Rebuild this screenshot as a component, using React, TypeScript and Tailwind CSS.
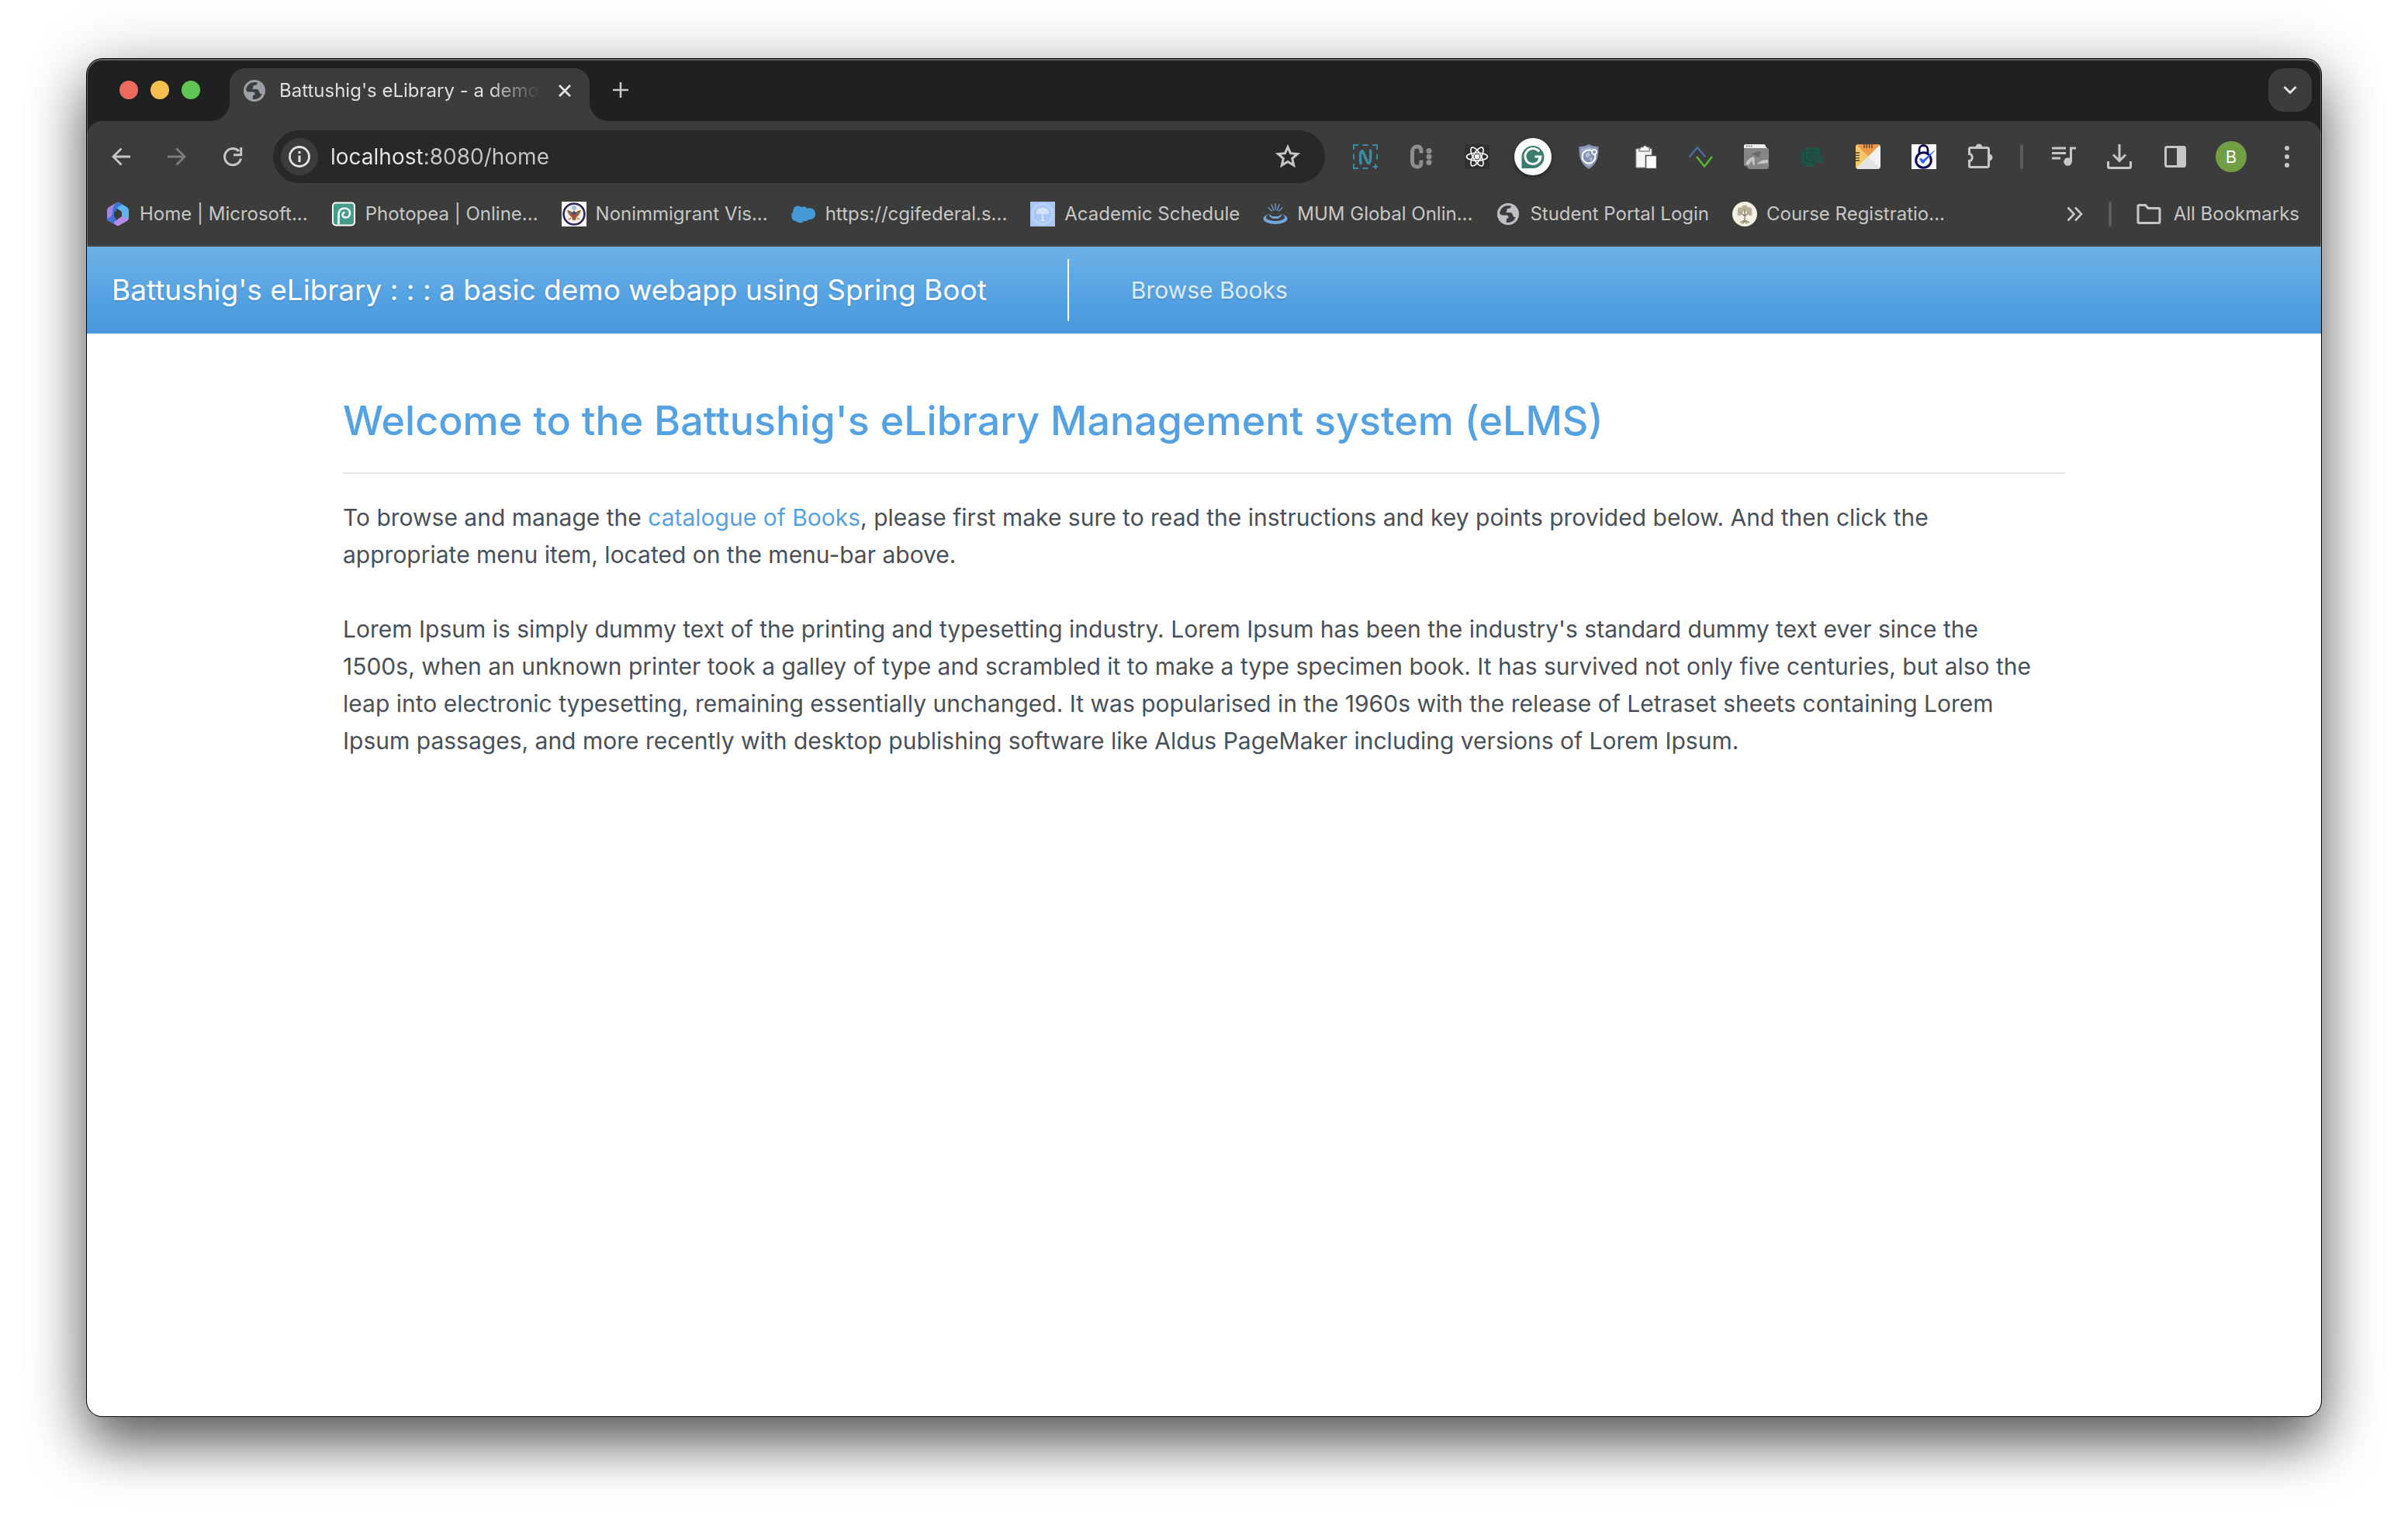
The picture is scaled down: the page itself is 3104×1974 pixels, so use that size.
import type { ReactNode } from "react";

type IconProps = { className?: string };

function Svg({ children, className = "size-8", box = "0 0 32 32" }: { children: ReactNode; className?: string; box?: string }) {
  return (
    <svg viewBox={box} className={className} fill="none" aria-hidden="true">
      {children}
    </svg>
  );
}

/* ---------- browser icons ---------- */

function GlobeIcon({ className }: IconProps) {
  return (
    <Svg className={className}>
      <circle cx="16" cy="16" r="14" fill="currentColor" />
      <path
        d="M5 15C6 9 10 5 16 5c1.500 0 2.800.3 4 .7-.4 2.300-1.800 3.300-4 3.300-1.600 0-1.700 1.300-1.600 2.500.1 1.400-1.100 1.500-1.600 2.500h5.200c3 0 4 1.800 4 3.600 0 1.400 1.200 1.700 1.900 1.900 1 .3 1.600 0 2-.5C24.800 24 20.500 27 15.800 27c-.9 0-1.500-.1-2-.2v-3.200c0-1.300 1-2.300 2.600-2.300v-1.800c0-1.500-1.400-2-2.900-2H9c-2 0-3.300-1-4-2.500z"
        fill="#3c3c3c"
      />
      <path d="M17 10c2.500-.3 4.400-1.400 5-3.200 3 2 5 5.200 5 9.200 0 1.600-.3 3-1 4-1.700.3-3-.4-3.300-2-.5-2.600-1.800-4.500-5-4.900-1.700-.3-1.500-2.700-.7-3.100z" fill="currentColor" />
    </Svg>
  );
}

function BackIcon() {
  return (
    <Svg>
      <path d="M28 16H7M16.500 5.500 6 16l10.500 10.500" stroke="currentColor" strokeWidth="2.800" />
    </Svg>
  );
}

function ForwardIcon() {
  return (
    <Svg>
      <path d="M4 16h21M15.500 5.500 26 16 15.500 26.500" stroke="currentColor" strokeWidth="2.800" />
    </Svg>
  );
}

function ReloadIcon() {
  return (
    <Svg>
      <path d="M26.500 18.500A10.600 10.600 0 1 1 24 9" stroke="currentColor" strokeWidth="3" />
      <path d="M26.700 4v9.700H17" stroke="currentColor" strokeWidth="3" />
    </Svg>
  );
}

function InfoIcon() {
  return (
    <Svg>
      <circle cx="16" cy="16" r="12.500" stroke="currentColor" strokeWidth="2.800" />
      <path d="M16 14.500V23M16 9v3" stroke="currentColor" strokeWidth="3" />
    </Svg>
  );
}

function StarIcon() {
  return (
    <Svg className="size-9" box="0 0 36 36">
      <path
        d="m18 5.500 3.500 8.200 9 .8-6.800 5.900 2 8.700-7.700-4.600-7.700 4.600 2-8.700-6.800-5.900 9-.8z"
        stroke="currentColor"
        strokeWidth="3"
      />
    </Svg>
  );
}

/* ---------- extension icons ---------- */

function SnapIcon() {
  return (
    <Svg>
      <path d="M1 7V1h6M12.500 1h7M25 1h6v6M31 12.500v7M1 12.500v7M1 25v6h6M12.500 31h7M25.500 29h6.500M29 25.500V32" stroke="#3b8aa0" strokeWidth="2" />
      <path d="M10 24.500C9 18 9.500 9 11.500 8.500 14 8 17 24 20.500 24.500c2.500 0 2.500-11 2-16.500" stroke="#3b8aa0" strokeWidth="3.600" strokeLinecap="round" />
    </Svg>
  );
}

function CDotsIcon() {
  return (
    <Svg>
      <path d="M16 11.500V9c0-4-1.800-6-5-6S4.500 5.500 4.500 9.500v13C4.500 26.500 7 29 11 29s5-2 5-6v-2.500" stroke="#8e8e8e" strokeWidth="5" />
      <circle cx="26" cy="8.500" r="3.500" fill="#8e8e8e" />
      <circle cx="26" cy="16" r="3.500" fill="#8e8e8e" />
      <circle cx="26" cy="23.500" r="3.500" fill="#8e8e8e" />
    </Svg>
  );
}

function AtomIcon() {
  return (
    <Svg>
      <rect width="32" height="32" rx="3" fill="#303030" />
      <g stroke="#fff" strokeWidth="1.600">
        <ellipse cx="16" cy="16" rx="13.500" ry="5" />
        <ellipse cx="16" cy="16" rx="13.500" ry="5" transform="rotate(60 16 16)" />
        <ellipse cx="16" cy="16" rx="13.500" ry="5" transform="rotate(120 16 16)" />
      </g>
      <circle cx="16" cy="16" r="3.200" fill="#fff" />
    </Svg>
  );
}

function GrammarIcon() {
  return (
    <span className="flex size-12 shrink-0 items-center justify-center rounded-full bg-white shadow-[0_2px_6px_rgba(0,0,0,0.45)]">
      <Svg>
        <path d="M1.500 31V16A14.500 14.500 0 1 1 16 31z" fill="#3a7d6e" />
        <path d="M24 9.500A10 10 0 1 0 26 16h-7.500M26 15.500l-3 7" stroke="#fff" strokeWidth="3" />
      </Svg>
    </span>
  );
}

function ShieldIcon() {
  return (
    <Svg>
      <path d="M16 0c4 2 8 3 12.500 3 .5 13-2 23-12.500 29C5.500 26 3 16 3.500 3 8 3 12 2 16 0z" fill="#8493b3" />
      <path d="M16 3c3 1.500 6 2.300 10 2.500 0 11-2 18-10 23.500C8 23.500 6 16.500 6 5.500 10 5.300 13 4.500 16 3z" fill="#a3aec8" />
      <circle cx="16" cy="16" r="8.500" fill="#8492b3" stroke="#fff" strokeWidth="2" />
      <path d="M12 12l4-2 2 4-3 3-3-1zM18 17l3 1-2 4-2-2z" fill="#b3bfd8" />
      <circle cx="23" cy="10" r="3" fill="#8c9bc0" stroke="#fff" strokeWidth="1.500" />
    </Svg>
  );
}

function PasteIcon() {
  return (
    <Svg>
      <path d="M5 6h6V4h3.500a2 2 0 0 1 4 0H22v2h3v24H5z" fill="#f4f4f4" stroke="#a5a5a5" strokeWidth="1" />
      <path d="M9 5v4h13V5" stroke="#8a8a8a" strokeWidth="1.500" />
      <rect x="17.500" y="14.500" width="14" height="17" fill="#fff" stroke="#4a4a4a" strokeWidth="1.500" />
    </Svg>
  );
}

function ZigzagIcon() {
  return (
    <Svg>
      <path d="M1.500 16.500 12 4l10 12" stroke="#4a6da7" strokeWidth="2.400" />
      <path d="m11 16 10 12.500L31 16" stroke="#5cb531" strokeWidth="2.600" />
    </Svg>
  );
}

function PhotoWindowIcon() {
  return (
    <Svg>
      <path d="M1 5h29a2 2 0 0 1 2 2v22a3 3 0 0 1-3 3H7c-2-.5-3-2-3-3.500L0 28V6z" fill="#868686" />
      <path d="M2 0h23a3 3 0 0 1 3 3l2 2H0V2a2 2 0 0 1 2-2z" fill="#efefef" />
      <path d="M3 2.500h1.500M6 2.500h1.500M9 2.500h1.500" stroke="#555" strokeWidth="1.500" />
      <path d="M2 26c1-4 3-6 6-8l4-2c3 1 1 6 2 12l-3-3-1-4-4 6zM17 25c3-3 7-5 14-5v4c-4 0-8 2-14 1z" fill="#c4c4c4" />
      <path d="M10 13c3-3 7-4 12-4l-3 8c-2 0-3-3-9-4z" fill="#6a6a6a" />
    </Svg>
  );
}

function KnotIcon() {
  return (
    <Svg>
      <path d="M7 4h16l4 4v10h5l-3 3 2 3H20l-2 5H9l-7-5V9h5z" fill="#1f5247" />
      <path d="M6.500 9v10l4 3.500H20M10 8.500h10" stroke="#174035" strokeWidth="1.200" />
      <path d="m16 11 4 2v5l-4 2-4-2v-5z" fill="#2f4440" />
      <circle cx="16" cy="15" r="2.500" fill="#1f5247" />
    </Svg>
  );
}

function RulerMailIcon() {
  return (
    <Svg>
      <rect width="32" height="32" rx="4" fill="#f2f2f2" />
      <path d="M4 0h24a4 4 0 0 1 2.800 1.200L16 16 1.200 1.200A4 4 0 0 1 4 0z" fill="#ee9a4d" />
      <path d="M1.200 1.200 16 16 1.200 30.800A4 4 0 0 1 0 28V4a4 4 0 0 1 1.200-2.800z" fill="#f4c767" />
      <path d="m16 16 14.800 14.800A4 4 0 0 1 28 32H4a4 4 0 0 1-2.800-1.200z" fill="#e3e3e3" />
      <path d="M11 0v5M14.300 0v5M17.600 0v5M21 0v5M0 11h5M0 14.300h5M0 17.600h5M0 21h5" stroke="#4b3b23" strokeWidth="1.300" />
    </Svg>
  );
}

function LockCheckIcon() {
  return (
    <Svg>
      <rect width="32" height="32" fill="#fff" />
      <path d="M10 12V7a5.500 5.500 0 0 1 11 0v5z" stroke="#0d0a57" strokeWidth="2.800" />
      <circle cx="15.500" cy="20.500" r="9.800" stroke="#0d0a57" strokeWidth="3" fill="#fff" />
      <path d="m10.500 19 4 6L29.500 8.500 15 20.500l-2-2z" fill="#2f5fff" stroke="#2f5fff" strokeWidth="1" />
    </Svg>
  );
}

function PuzzleIcon() {
  return (
    <Svg className="size-9" box="0 0 36 36">
      <path d="M6 6.500h22A1.500 1.500 0 0 1 29.500 8v22a1.500 1.500 0 0 1-1.500 1.500H6A1.500 1.500 0 0 1 4.500 30v-6.500c5 0 5-9 0-9V8A1.500 1.500 0 0 1 6 6.500z" stroke="currentColor" strokeWidth="3" />
      <path d="M12.500 6a4.500 4.500 0 0 1 9 0zM30 14.500a4.500 4.500 0 0 1 0 9z" fill="currentColor" />
    </Svg>
  );
}

function MediaIcon() {
  return (
    <Svg>
      <path d="M1 5h18M1 11.500h18M1 18h11" stroke="currentColor" strokeWidth="2.800" />
      <path d="M25.500 22V5H32" stroke="currentColor" strokeWidth="3" />
      <circle cx="21.500" cy="22.500" r="5.200" fill="currentColor" />
    </Svg>
  );
}

function DownloadIcon() {
  return (
    <Svg>
      <path d="M16 0v21M8 13.500l8 8 8-8" stroke="currentColor" strokeWidth="3" />
      <path d="M1.500 22v7a1.500 1.500 0 0 0 1.500 1.500h26a1.500 1.500 0 0 0 1.500-1.500v-7" stroke="currentColor" strokeWidth="3" />
    </Svg>
  );
}

function SidePanelIcon() {
  return (
    <Svg>
      <rect x="3.500" y="3.500" width="25" height="25" rx="2" stroke="currentColor" strokeWidth="3" />
      <path d="M18 3h11v26H18z" fill="currentColor" />
    </Svg>
  );
}

function KebabIcon() {
  return (
    <Svg>
      <circle cx="16" cy="5" r="3" fill="currentColor" />
      <circle cx="16" cy="16" r="3" fill="currentColor" />
      <circle cx="16" cy="27" r="3" fill="currentColor" />
    </Svg>
  );
}

/* ---------- bookmark icons ---------- */

function HexIcon() {
  return (
    <Svg>
      <path d="M14 1.500c2-.8 3-.5 4.500.3l9 5.200c1.500 1 2.500 2.500 2.500 4.500v9c0 1.500-.8 2.700-2 3.500l-8-5V12l-7-4z" fill="#5db4f0" />
      <path d="M14 1.500 11 13v9l-7 3c-1.300-1-2-2.500-2-4.500v-9C2 9.500 3 8 4.500 7z" fill="#a487e0" />
      <path d="M14 1.500c2-.8 3-.5 4.500.3L22 4c-3 1-8 3-8 8v4l-3 6-7 3c-1-.7-1.700-2-2-3 5-2 7-4 7-9 0-4 1-8 5-11.500z" fill="#3d74d6" />
      <path d="M2 20.500c0 2 1 3.500 2.500 4.500l9.500 5.500c1.300.7 2.700.7 4 0l9.500-5.500c1.500-1 2.500-2.500 2.500-4.500-3 1.500-6 0-9-1.500L14 24c-4 1-9 1-12-3.500z" fill="#b48be8" />
      <path d="M2 20.500c0 2 1 3.500 2.500 4.500l6 3.500L14 22l-3-2c-3 3-6 3-9 .5z" fill="#3d74d6" />
      <path d="M16 10.500 21 13.300v5.600L16 21.700l-5-2.800v-5.600z" fill="#3c3c3c" />
    </Svg>
  );
}

function SpiralIcon() {
  return (
    <Svg>
      <rect x="2" y="1.500" width="28" height="29" rx="4" fill="#459c8b" stroke="#fff" strokeWidth="2" />
      <path d="M9.500 29V17c0-5.500 3-8.500 7.500-8.500 4 0 7 2.500 7 6.200 0 3.400-2.500 5.800-5.500 5.800-2.300 0-4-1.500-4-3.500s1.300-3 3-3" stroke="#fff" strokeWidth="2.600" />
    </Svg>
  );
}

function SealIcon() {
  return (
    <Svg>
      <rect width="32" height="32" fill="#fff" />
      <circle cx="16" cy="16" r="13.500" fill="#f3eee6" stroke="#2d2560" strokeWidth="2.600" />
      <path d="M7 11c2 0 5 1 7 3l2-3 2 3c2-2 5-3 7-3-1 4-3 7-6 9l-1 4h-4l-1-4c-3-2-5-5-6-9z" fill="#8a6a45" />
      <path d="M13.500 14.500h5V19L16 22l-2.500-3z" fill="#b84141" />
      <path d="M13.500 13.500h5v2.500h-5z" fill="#34458f" />
      <circle cx="16" cy="8" r="3" fill="#9dc3e0" />
      <path d="m9 23 3-2M23 23l-3-2" stroke="#c19a3f" strokeWidth="2" />
    </Svg>
  );
}

function CloudIcon() {
  return (
    <Svg>
      <path d="M6 25C2 24.500 0 22 .5 18.500 0 16 1 14 2.500 13 2 8 5 5.500 8.500 5.500c2 0 3.800.8 5 2 1.300-1.300 5-1.500 7 1.200 5-1.700 10.500 1 10.500 7 0 5-4 7.800-8.500 7.300-1.500 2-4 2.500-6.500 2-2.500 3.500-8 2.500-10 0z" fill="#459ad8" />
    </Svg>
  );
}

function TreeSealIcon() {
  return (
    <Svg>
      <rect width="32" height="32" fill="#a9c6f5" />
      <circle cx="16" cy="16" r="13" stroke="#c6daf9" strokeWidth="2.500" strokeDasharray="2 1" />
      <path d="M8 15c-1-4 3-7 8-7s9 3 8 7c-2 2-4 1-5 0l-2 2v6l3 2h-8l3-2v-6l-2-2c-1 1-4 2-5 0z" fill="#d5e4fc" />
    </Svg>
  );
}

function FountainIcon() {
  return (
    <Svg>
      <path d="M16 2v9M11 3.500l3 8M21 3.500l-3 8M6.500 7.500l5.500 5M25.500 7.500l-5.500 5" stroke="#6d9fd0" strokeWidth="1.300" />
      <ellipse cx="16" cy="22" rx="15.500" ry="7" fill="#70a6dc" />
      <ellipse cx="16" cy="20" rx="12" ry="5" fill="#3c3c3c" />
      <path d="M8.500 17c1 6 14 6 15 0-2 3.500-13 3.500-15 0z" fill="#70a6dc" stroke="#70a6dc" strokeWidth="1.200" />
    </Svg>
  );
}

function TreeBadgeIcon() {
  return (
    <Svg>
      <circle cx="16" cy="16" r="16" fill="#f4f0e4" />
      <g fill="#b9b198">
        <circle cx="16" cy="8.500" r="4" />
        <circle cx="10.500" cy="11" r="3.800" />
        <circle cx="21.500" cy="11" r="3.800" />
        <circle cx="9" cy="15.500" r="2.600" />
        <circle cx="23" cy="15.500" r="2.600" />
      </g>
      <path d="M16 10v15M16 19l-5-5M16 19l5-5M10 27l6-3 6 3M13 28.500l3-3 3 3" stroke="#978d70" strokeWidth="1.600" />
    </Svg>
  );
}

function FolderIcon() {
  return (
    <Svg>
      <path d="M3.500 4.500h8l3.500 4h13.500A1.500 1.500 0 0 1 30 10v16a1.500 1.500 0 0 1-1.500 1.500h-25A1.500 1.500 0 0 1 2 26V6a1.500 1.500 0 0 1 1.500-1.500z" stroke="currentColor" strokeWidth="3" />
    </Svg>
  );
}

/* ---------- data ---------- */

const extensions = [
  { label: "Snapshot", icon: <SnapIcon /> },
  { label: "Code dots", icon: <CDotsIcon /> },
  { label: "React tools", icon: <AtomIcon /> },
  { label: "Grammar check", icon: <GrammarIcon /> },
  { label: "Shield", icon: <ShieldIcon /> },
  { label: "Clipboard", icon: <PasteIcon /> },
  { label: "Validator", icon: <ZigzagIcon /> },
  { label: "Window photo", icon: <PhotoWindowIcon /> },
  { label: "Knot", icon: <KnotIcon /> },
  { label: "Page ruler", icon: <RulerMailIcon /> },
  { label: "Lock check", icon: <LockCheckIcon /> },
  { label: "Extensions", icon: <PuzzleIcon /> },
];

const bookmarks = [
  { label: "Home | Microsoft...", icon: <HexIcon /> },
  { label: "Photopea | Online...", icon: <SpiralIcon /> },
  { label: "Nonimmigrant Vis...", icon: <SealIcon /> },
  { label: "https://cgifederal.s...", icon: <CloudIcon /> },
  { label: "Academic Schedule", icon: <TreeSealIcon /> },
  { label: "MUM Global Onlin...", icon: <FountainIcon /> },
  { label: "Student Portal Login", icon: <GlobeIcon className="size-8 text-[#bdc1c6]" /> },
  { label: "Course Registratio...", icon: <TreeBadgeIcon /> },
];

function ToolButton({ label, children, className = "" }: { label: string; children: ReactNode; className?: string }) {
  return (
    <button type="button" aria-label={label} className={`flex h-14 w-18 shrink-0 items-center justify-center ${className}`}>
      {children}
    </button>
  );
}

function TabStrip() {
  return (
    <div className="flex h-20 items-end bg-[#1f2120]">
      <div className="flex h-full w-40 shrink-0 items-center gap-4 pl-[42px]">
        <button type="button" aria-label="Close window" className="size-6 rounded-full bg-[#ed6a5e]" />
        <button type="button" aria-label="Minimize window" className="size-6 rounded-full bg-[#f5bf4f]" />
        <button type="button" aria-label="Zoom window" className="size-6 rounded-full bg-[#61c554]" />
      </div>
      <Svg className="size-6 shrink-0" box="0 0 24 24">
        <path d="M24 0v24H0A24 24 0 0 0 24 0z" fill="#3c3c3c" />
      </Svg>
      <div className="flex h-[68px] w-[464px] shrink-0 items-center rounded-t-[20px] bg-[#3c3c3c] pr-4 pb-[10px] pl-4 text-[#e3e3e3]">
        <GlobeIcon className="size-8 shrink-0 text-[#9aa0a6]" />
        <span className="ml-4 min-w-0 flex-1 overflow-hidden bg-[linear-gradient(90deg,#e3e3e3_80%,#3c3c3c_100%)] bg-clip-text text-2xl whitespace-nowrap text-transparent">
          Battushig's eLibrary - a demo webapp
        </span>
        <button type="button" aria-label="Close tab" className="ml-4 flex size-8 items-center justify-center">
          <Svg>
            <path d="m9 9 14 14M23 9 9 23" stroke="currentColor" strokeWidth="2.800" />
          </Svg>
        </button>
      </div>
      <Svg className="size-6 shrink-0" box="0 0 24 24">
        <path d="M0 0v24h24A24 24 0 0 1 0 0z" fill="#3c3c3c" />
      </Svg>
      <button type="button" aria-label="New tab" className="mb-6 flex size-8 items-center justify-center text-[#c7c7c7]">
        <Svg>
          <path d="M16 6v20M6 16h20" stroke="currentColor" strokeWidth="2.600" />
        </Svg>
      </button>
      <button
        type="button"
        aria-label="Search tabs"
        className="mr-3 mb-3 ml-auto flex size-14 items-center justify-center rounded-[20px] bg-[#3c3c3c] text-[#e3e3e3]"
      >
        <Svg>
          <path d="m8.500 12 7.500 7.500 7.500-7.500" stroke="currentColor" strokeWidth="3" />
        </Svg>
      </button>
    </div>
  );
}

function Toolbar() {
  return (
    <div className="flex h-[92px] items-center px-2 text-[#c7c7c7]">
      <ToolButton label="Back"><BackIcon /></ToolButton>
      <ToolButton label="Forward" className="text-[#7c7c7c]"><ForwardIcon /></ToolButton>
      <ToolButton label="Reload"><ReloadIcon /></ToolButton>
      <div className="mx-4 flex h-[68px] min-w-0 flex-1 items-center rounded-full bg-[#282828] pr-[30px] pl-[10px]">
        <button type="button" aria-label="Site information" className="flex size-12 shrink-0 items-center justify-center rounded-full bg-[#3c3c3c] text-[#e3e3e3]">
          <InfoIcon />
        </button>
        <input
          type="text"
          aria-label="Address"
          defaultValue="localhost:8080/home"
          className="mr-4 ml-4 min-w-0 flex-1 bg-[linear-gradient(90deg,#e8e8e8_122px,#c7c7c7_122px)] bg-clip-text text-[28px] text-transparent outline-none"
        />
        <button type="button" aria-label="Bookmark this page" className="shrink-0">
          <StarIcon />
        </button>
      </div>
      {extensions.map((e) => (
        <ToolButton key={e.label} label={e.label}>{e.icon}</ToolButton>
      ))}
      <div className="flex w-9 shrink-0 justify-center">
        <span className="h-8 w-1 rounded-full bg-[#5c5c5c]" />
      </div>
      <ToolButton label="Media controls"><MediaIcon /></ToolButton>
      <ToolButton label="Downloads"><DownloadIcon /></ToolButton>
      <ToolButton label="Side panel"><SidePanelIcon /></ToolButton>
      <ToolButton label="Profile">
        <span className="flex size-10 items-center justify-center rounded-full bg-[#729e45] text-[22px] text-white">B</span>
      </ToolButton>
      <ToolButton label="Menu"><KebabIcon /></ToolButton>
    </div>
  );
}

function BookmarksBar() {
  return (
    <nav aria-label="Bookmarks" className="flex h-14 items-center pr-7 pl-6 text-2xl text-[#c7c7c7]">
      <div className="flex min-w-0 flex-1 items-center gap-[30px] overflow-hidden">
        {bookmarks.map((b) => (
          <a key={b.label} href="#bookmark" className="flex shrink-0 items-center gap-3 whitespace-nowrap">
            {b.icon}
            {b.label}
          </a>
        ))}
      </div>
      <button type="button" aria-label="More bookmarks" className="flex size-8 items-center justify-center">
        <Svg>
          <path d="m7.500 7.500 8 8.500-8 8.500M17 7.500l8 8.500-8 8.500" stroke="currentColor" strokeWidth="2.600" />
        </Svg>
      </button>
      <span className="mr-8 ml-7 h-8 w-1 rounded-full bg-[#5c5c5c]" />
      <button type="button" className="flex shrink-0 items-center gap-4 whitespace-nowrap">
        <FolderIcon />
        All Bookmarks
      </button>
    </nav>
  );
}

function SiteNav() {
  return (
    <nav aria-label="Main" className="flex h-28 items-center bg-[linear-gradient(180deg,#6eb2e7,#54a1e2_60%,#4998dd)] px-8">
      <a href="#home" className="text-[37px] whitespace-nowrap text-white [text-shadow:0_2px_2px_rgba(0,0,0,0.1)]">
        Battushig's eLibrary : : : a basic demo webapp using Spring Boot
      </a>
      <span className="ml-[104px] h-20 w-[2px] bg-white" />
      <a href="#books" className="ml-20 text-[30px] whitespace-nowrap text-white/80 [text-shadow:0_2px_2px_rgba(0,0,0,0.1)]">
        Browse Books
      </a>
    </nav>
  );
}

export default function App() {
  return (
    <div className="flex min-h-screen flex-col bg-white px-28 pt-[76px] pb-[148px] font-[Inter,sans-serif]">
      <div className="flex flex-1 flex-col overflow-hidden rounded-[20px] bg-white shadow-[0_0_0_1px_#000,0_36px_70px_rgba(0,0,0,0.6),0_0_90px_rgba(0,0,0,0.16)]">
        <header className="relative bg-[#1f2120]">
          <TabStrip />
          <div className="rounded-t-[20px] border-b-2 border-[#464646] bg-[#3c3c3c] pb-3">
            <Toolbar />
            <BookmarksBar />
          </div>
          <div className="pointer-events-none absolute inset-0 rounded-t-[20px] border-x border-t-2 border-white/30" />
        </header>
        <SiteNav />
        <main className="mx-auto w-full max-w-[2220px] pt-[78px] text-[#495057]">
          <h1 className="border-b-2 border-[#e5e5e5] pb-[31px] text-[52px] leading-[70px] font-medium text-[#55a2e3]">
            Welcome to the Battushig's eLibrary Management system (eLMS)
          </h1>
          <p className="mt-8 text-[30px] leading-[48px]">
            To browse and manage the{" "}
            <a href="#books" className="text-[#55a2e3]">catalogue of Books</a>, please first make sure to read the
            instructions and key points provided below. And then click the <br />
            appropriate menu item, located on the menu-bar above.
          </p>
          <p className="mt-12 text-[30px] leading-[48px]">
            Lorem Ipsum is simply dummy text of the printing and typesetting industry. Lorem Ipsum has been the
            industry's standard dummy text ever since the <br />
            1500s, when an unknown printer took a galley of type and scrambled it to make a type specimen book. It has
            survived not only five centuries, but also the <br />
            leap into electronic typesetting, remaining essentially unchanged. It was popularised in the 1960s with the
            release of Letraset sheets containing Lorem <br />
            Ipsum passages, and more recently with desktop publishing software like Aldus PageMaker including versions
            of Lorem Ipsum.
          </p>
        </main>
      </div>
    </div>
  );
}
